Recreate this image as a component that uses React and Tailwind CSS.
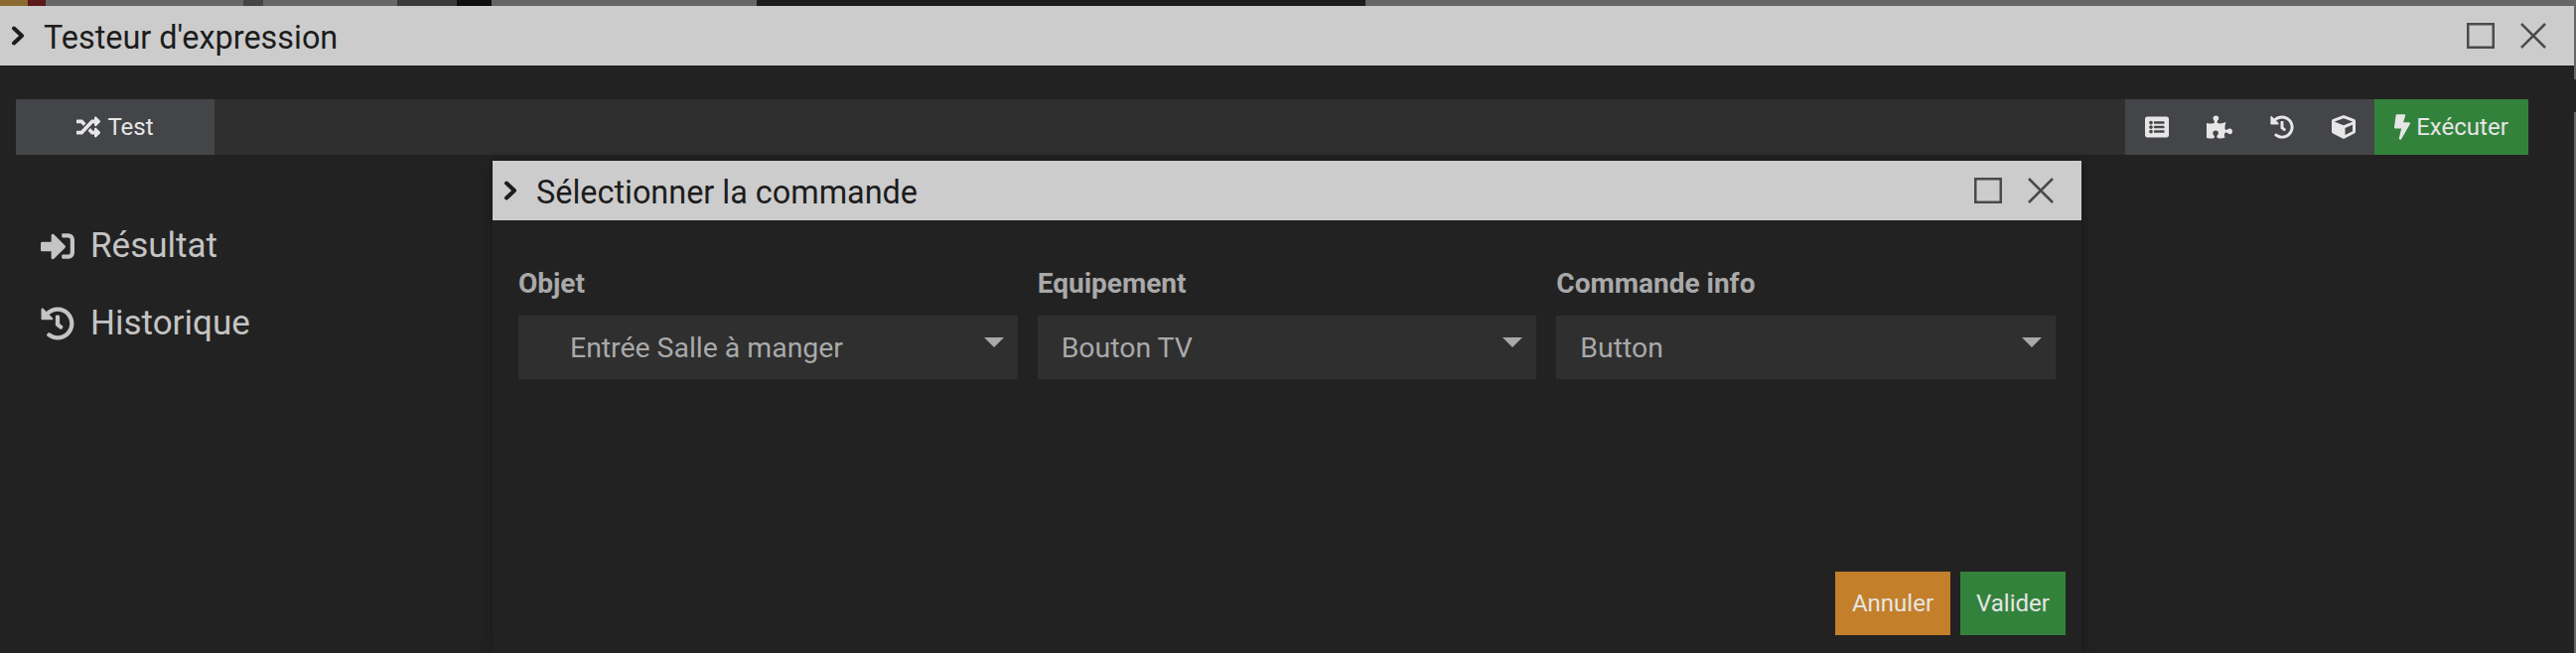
import { FaBolt, FaCube, FaHistory, FaListAlt, FaPuzzlePiece, FaRandom, FaSignInAlt } from 'react-icons/fa';

function TitleBar({ title }) {
    return (
        <div className="h-[60px] bg-[#cccccc] flex items-center text-[#1c1c1c]">
            <svg viewBox="0 0 14 20" className="w-[14px] h-[20px] ml-[11px] mr-[19px] shrink-0" fill="none" stroke="currentColor" strokeWidth="4" strokeLinecap="round" strokeLinejoin="round">
                <path d="M3 2.5l8 7.5-8 7.5" />
            </svg>
            <span className="text-[32.4px] leading-none flex-1 pt-[4px]">{title}</span>
            <svg viewBox="0 0 28 26" className="w-[28px] h-[26px] mr-[26px] text-[#4a4a4a]" fill="none" stroke="currentColor" strokeWidth="2.5">
                <rect x="1.25" y="1.25" width="25.5" height="23.5" />
            </svg>
            <svg viewBox="0 0 26 26" className="w-[26px] h-[26px] mr-[28px] text-[#4a4a4a]" fill="none" stroke="currentColor" strokeWidth="2.5">
                <path d="M1 1l24 24M25 1L1 25" />
            </svg>
        </div>
    );
}

function Field({ label, value, indent }) {
    return (
        <div className="flex-1">
            <div className="text-[28px] leading-[32px] font-bold text-[#a9a9a9] mb-[16px]">{label}</div>
            <div className={`relative h-[64px] bg-[#2f2f2f] flex items-center pt-[2px] text-[28.4px] text-[#a9a9a9] ${indent ? 'pl-[52px]' : 'pl-[24px]'}`}>
                {value}
                <span className="absolute right-[14px] top-[22px] w-0 h-0 border-x-[10px] border-x-transparent border-t-[10px] border-t-[#a9a9a9]"></span>
            </div>
        </div>
    );
}

export default function App() {
    return (
        <div className="relative w-[2594px] h-[658px] overflow-hidden bg-[#666666] font-['Roboto',sans-serif] flex">
            <div className="w-[2592px] shrink-0 flex flex-col">
                <div className="h-[6px] flex shrink-0">
                    <div className="w-[28px] bg-[#8a6a30]"></div>
                    <div className="w-[18px] bg-[#5a1a1a]"></div>
                    <div className="w-[199px] bg-[#666666]"></div>
                    <div className="w-[20px] bg-[#444444]"></div>
                    <div className="w-[135px] bg-[#666666]"></div>
                    <div className="w-[60px] bg-[#3a3a3a]"></div>
                    <div className="w-[35px] bg-[#101010]"></div>
                    <div className="w-[267px] bg-[#666666]"></div>
                    <div className="w-[613px] bg-[#1c1e1d]"></div>
                    <div className="flex-1 bg-[#666666]"></div>
                </div>
                <TitleBar title="Testeur d'expression" />

                <div className="flex-1 bg-[#222222]">
                    <div className="px-[16px] pt-[34px]">
                        <div className="w-[2530px] h-[56px] bg-[#2f2f2f] flex justify-between text-[#e6e6e6] text-[24px]">
                            <div className="w-[200px] bg-[#444548] flex items-center justify-center gap-[7px]">
                                <FaRandom className="w-[24px] h-[24px]" />
                                Test
                            </div>
                            <div className="flex">
                                <div className="w-[251px] bg-[#444548] flex items-center pl-[20px] gap-[38px]">
                                    <FaListAlt className="w-[24px] h-[24px]" />
                                    <FaPuzzlePiece className="w-[26px] h-[26px]" />
                                    <FaHistory className="w-[24px] h-[24px]" />
                                    <FaCube className="w-[24px] h-[24px]" />
                                </div>
                                <div className="w-[155px] bg-[#33823c] flex items-center justify-center gap-[6px]">
                                    <FaBolt className="w-[16px] h-[26px]" />
                                    Exécuter
                                </div>
                            </div>
                        </div>
                    </div>

                    <div className="pl-[41px] pt-[71px] text-[#c4c4c4] text-[35px] flex flex-col gap-[36px]">
                        <div className="flex items-center gap-[16px] h-[42px]">
                            <FaSignInAlt className="w-[34px] h-[34px]" />
                            Résultat
                        </div>
                        <div className="flex items-center gap-[16px] h-[42px]">
                            <FaHistory className="w-[34px] h-[34px]" />
                            Historique
                        </div>
                    </div>
                </div>
            </div>

            {/* Scrollbar sliver on the right of the window */}
            <div className="flex-1 flex flex-col">
                <div className="h-[80px] bg-[#666666]"></div>
                <div className="h-[33px] bg-[#222222]"></div>
                <div className="flex-1 bg-[#666666]"></div>
            </div>

            {/* Modal over the page */}
            <div className="absolute left-[496px] top-[162px] w-[1600px] h-[496px] bg-[#222222] flex flex-col shadow-[0_0_12px_rgba(0,0,0,0.35)]">
                <TitleBar title="Sélectionner la commande" />
                <div className="flex gap-[20px] pl-[26px] pr-[26px] pt-[48px]">
                    <Field label="Objet" value="Entrée Salle à manger" indent />
                    <Field label="Equipement" value="Bouton TV" />
                    <Field label="Commande info" value="Button" />
                </div>
                <div className="mt-auto mb-[18px] mr-[16px] flex justify-end gap-[10px] text-[24px] text-[#e6e6e6]">
                    <div className="w-[116px] h-[64px] bg-[#c37f29] flex items-center justify-center">Annuler</div>
                    <div className="w-[106px] h-[64px] bg-[#33823c] flex items-center justify-center">Valider</div>
                </div>
            </div>
        </div>
    );
}
